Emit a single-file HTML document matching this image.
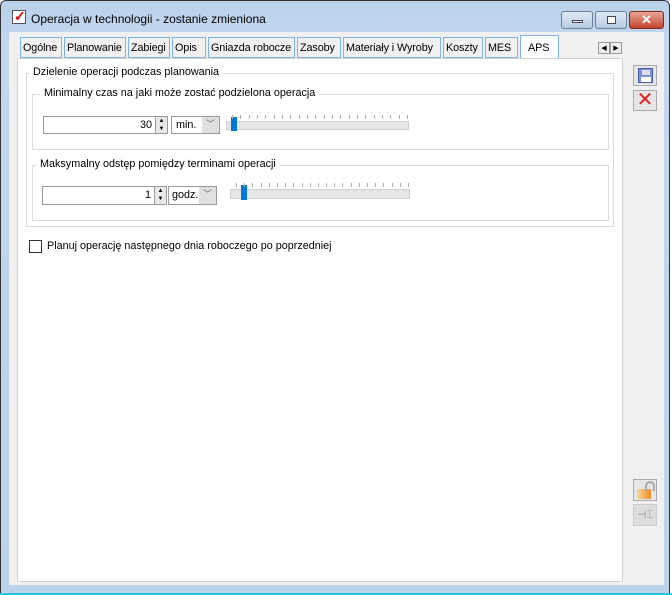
<!DOCTYPE html><html><head><style>
body{margin:0;width:672px;height:595px;position:relative;overflow:hidden;background:#fff;font-family:"Liberation Sans",sans-serif;font-size:10.8px;color:#000}
div{position:absolute;box-sizing:border-box}
.tab{top:37px;height:21px;background:#f0f0f0;border:1px solid #7eb4ea;padding:4px 0 0 2px;white-space:nowrap;letter-spacing:-0.1px}
.g{border:1px solid #dcdcdc}
.lbl{background:#fff;padding:0 4px;white-space:nowrap}
.tk{width:1px;height:4px;background:#b0b0b0}
</style></head><body>
<div style="left:0;top:0;width:670px;height:594px;background:linear-gradient(#b9d1ea,#c2d7ee 40px,#bcd3ea);border:1px solid #333;border-radius:6px 6px 0 0"></div>
<div style="left:0;top:593px;width:672px;height:2px;background:#2cc3e0"></div>
<div style="left:9px;top:32px;width:655px;height:553px;background:#f0f0f0"></div>
<div style="left:12px;top:10px;width:14px;height:14px;background:#fff;border:1px solid #555"></div>
<div style="left:14px;top:8px;font-size:14px;color:#d00;font-weight:bold">✓</div>
<div style="left:31px;top:12px;font-size:12px;color:#000">Operacja w technologii - zostanie zmieniona</div>
<div style="left:561px;top:11px;width:32px;height:18px;border:1px solid #6b7f99;border-radius:3px;background:linear-gradient(#dfe9f5,#b7cbe3)"><div style="left:10px;top:8px;width:11px;height:3px;background:#fff;border:1px solid #445"></div></div>
<div style="left:595px;top:11px;width:32px;height:18px;border:1px solid #6b7f99;border-radius:3px;background:linear-gradient(#dfe9f5,#b7cbe3)"><div style="left:11px;top:4px;width:9px;height:8px;border:1px solid #445;background:#fff"></div></div>
<div style="left:629px;top:11px;width:35px;height:18px;border:1px solid #7a2a20;border-radius:3px;background:linear-gradient(#e8a595,#c5452e);color:#fff;font-weight:bold;font-size:13px;text-align:center;line-height:16px">✕</div>
<div class="tab" style="left:20px;width:42px">Ogólne</div>
<div class="tab" style="left:64px;width:62px">Planowanie</div>
<div class="tab" style="left:128px;width:42px">Zabiegi</div>
<div class="tab" style="left:172px;width:34px">Opis</div>
<div class="tab" style="left:208px;width:87px">Gniazda robocze</div>
<div class="tab" style="left:297px;width:44px">Zasoby</div>
<div class="tab" style="left:343px;width:98px">Materiały i Wyroby</div>
<div class="tab" style="left:443px;width:40px">Koszty</div>
<div class="tab" style="left:485px;width:33px">MES</div>
<div class="tab" style="left:520px;top:35px;width:39px;height:24px;background:#fff;padding:6px 0 0 7px;border-bottom:none">APS</div>
<div style="left:598px;top:42px;width:12px;height:12px;border:1px solid #999;background:#eee;font-size:7px;text-align:center;line-height:11px">◀</div>
<div style="left:610px;top:42px;width:12px;height:12px;border:1px solid #999;background:#eee;font-size:7px;text-align:center;line-height:11px">▶</div>
<div style="left:17px;top:58px;width:606px;height:524px;background:#fff;border:1px solid #d4d4d4"></div>
<div class="g" style="left:26px;top:73px;width:588px;height:154px"></div>
<div class="lbl" style="left:29px;top:66px">Dzielenie operacji podczas planowania</div>
<div class="g" style="left:32px;top:94px;width:577px;height:56px"></div>
<div class="lbl" style="left:40px;top:87px">Minimalny czas na jaki może zostać podzielona operacja</div>
<div class="g" style="left:32px;top:165px;width:577px;height:56px"></div>
<div class="lbl" style="left:36px;top:158px">Maksymalny odstęp pomiędzy terminami operacji</div>
<div style="left:43px;top:116px;width:113px;height:18px;border:1px solid #999;text-align:right;padding:2px 3px 0 0">30</div>
<div style="left:156px;top:116px;width:12px;height:18px;border:1px solid #999;border-left:none;background:#e8e8e8;font-size:6px;line-height:8px;text-align:center">▲<br>▼</div>
<div style="left:171px;top:116px;width:49px;height:18px;border:1px solid #999;padding:2px 0 0 4px">min.</div>
<div style="left:202px;top:117px;width:17px;height:16px;background:#e0e0e0;color:#666;font-size:9px;text-align:center;line-height:15px">﹀</div>
<div style="left:42px;top:186px;width:113px;height:19px;border:1px solid #999;text-align:right;padding:2px 3px 0 0">1</div>
<div style="left:155px;top:186px;width:12px;height:19px;border:1px solid #999;border-left:none;background:#e8e8e8;font-size:6px;line-height:8px;text-align:center">▲<br>▼</div>
<div style="left:168px;top:186px;width:49px;height:19px;border:1px solid #999;padding:2px 0 0 3px">godz.</div>
<div style="left:199px;top:187px;width:17px;height:17px;background:#e0e0e0;color:#666;font-size:9px;text-align:center;line-height:15px">﹀</div>
<div style="left:226px;top:121px;width:183px;height:9px;background:#e6e6e6;border:1px solid #d0d0d0"></div>
<div style="left:231px;top:117px;width:6px;height:14px;background:#0078d7"></div>
<div style="left:230px;top:189px;width:180px;height:10px;background:#e6e6e6;border:1px solid #d0d0d0"></div>
<div style="left:241px;top:185px;width:6px;height:15px;background:#0078d7"></div>
<div id="t1" style="left:0;top:0"></div>
<div style="left:29px;top:240px;width:13px;height:13px;border:1px solid #333;background:#fff"></div>
<div style="left:47px;top:240px">Planuj operację następnego dnia roboczego po poprzedniej</div>
<div style="left:633px;top:65px;width:24px;height:21px;border:1px solid #aaa;background:#e6e6e6"><div style="left:4px;top:2px;width:15px;height:15px;background:#7f8fd8;border:1px solid #4a5aa8"><div style="left:3px;top:1px;width:8px;height:5px;background:#dde"></div><div style="left:2px;top:8px;width:10px;height:5px;background:#fff"></div></div></div>
<div style="left:633px;top:90px;width:24px;height:21px;border:1px solid #aaa;background:#e6e6e6;color:#e02020;font-size:20px;line-height:19px;text-align:center">✕</div>
<div style="left:633px;top:479px;width:24px;height:22px;border:1px solid #aaa;background:#e6e6e6"><div style="left:3px;top:9px;width:14px;height:10px;background:linear-gradient(90deg,#f7d7a0,#f08a20);border-radius:1px"></div><div style="left:11px;top:1px;width:10px;height:10px;border:2px solid #aaa;border-bottom:none;border-radius:5px 5px 0 0"></div></div>
<div style="left:633px;top:504px;width:24px;height:22px;border:1px solid #ccc;background:#ddd;color:#999;font-size:11px;text-align:center;line-height:20px">⊣⌶</div>
<script>
var h='';[[226,409,115],[230,410,183]].forEach(function(a){for(var i=0;i<22;i++){var x=Math.round(a[0]+6+i*(a[1]-a[0]-8)/21);h+='<div class="tk" style="left:'+x+'px;top:'+a[2]+'px"></div>';}});
document.getElementById('t1').innerHTML=h;
</script>
</body></html>
